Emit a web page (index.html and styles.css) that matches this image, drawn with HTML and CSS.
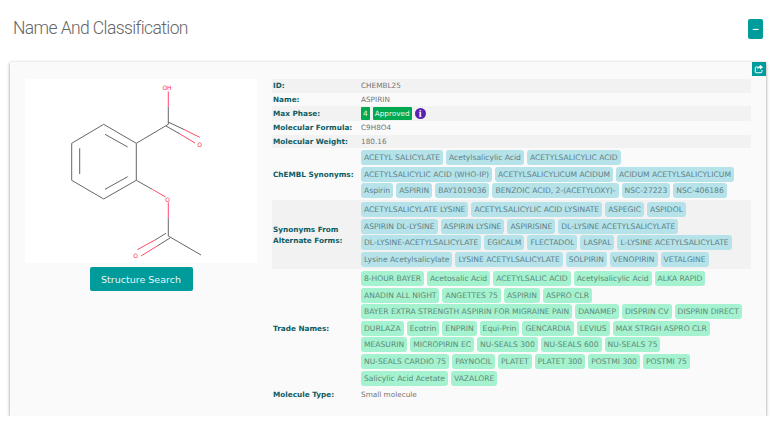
FILE: index.html
```html
<!DOCTYPE html>
<html lang="en">
<head>
    <meta charset="UTF-8">
    <title>Name And Classification</title>
    <link rel="stylesheet" href="styles.css">
</head>
<body>
    <div class="section-header">
        <h2>Name And Classification</h2>
        <button class="collapse-btn">&minus;</button>
    </div>

    <div class="card">
        <a class="share-btn">
            <svg viewBox="0 0 12 12" width="10" height="10">
                <path d="M9.5 7v2.5a1 1 0 0 1-1 1h-6a1 1 0 0 1-1-1v-5a1 1 0 0 1 1-1h2" fill="none" stroke="#fff" stroke-width="1.2"/>
                <path d="M7 1v1.6C4.8 2.8 3.6 4.2 3.6 6.8 4.4 5.4 5.4 4.9 7 4.9v1.7L11 3.8z" fill="#fff"/>
            </svg>
        </a>

        <div class="structure">
            <div class="structure-img">
                <svg viewBox="25 79 232 184" width="232" height="184">
                    <g class="bond">
                        <path d="M103.7 124.3L136.3 143.3V180.3L103.7 199L71.7 180.3V143.3Z"/>
                        <path d="M105 134.3L127.7 147M79.7 148.3V174M105 189.3L127.7 176.7"/>
                        <path d="M136.3 143.3L168.3 124.3V106.7"/>
                        <path d="M168 122L184 129.5M166 126L180 134"/>
                        <path d="M136.3 180.3L152.3 189.3"/>
                        <path d="M168.3 218.3V236L201 255"/>
                        <path d="M166 233.3L155 240M170 238L158 245.5"/>
                    </g>
                    <g class="bond-o">
                        <path d="M168.3 106.7V91.5"/>
                        <path d="M184 129.5L199.7 137.3M180 134L195 143"/>
                        <path d="M152.3 189.3L165.7 197"/>
                        <path d="M168.3 202.5V218.3"/>
                        <path d="M155 240L137.3 249.7M158 245.5L141 256"/>
                    </g>
                    <text x="167" y="90" class="atom">OH</text>
                    <text x="199.700" y="146.500" class="atom">O</text>
                    <text x="167.700" y="202" class="atom">O</text>
                    <text x="135.700" y="258" class="atom">O</text>
                </svg>
            </div>
            <button class="search-btn">Structure Search</button>
        </div>

        <table class="props">
            <tr class="alt"><th>ID:</th><td>CHEMBL25</td></tr>
            <tr><th>Name:</th><td>ASPIRIN</td></tr>
            <tr class="alt">
                <th>Max Phase:</th>
                <td>
                    <div class="phase-cell">
                        <span class="phase">4</span>
                        <span class="phase">Approved</span>
                        <span class="info">i</span>
                    </div>
                </td>
            </tr>
            <tr><th>Molecular Formula:</th><td>C9H8O4</td></tr>
            <tr class="alt"><th>Molecular Weight:</th><td>180.16</td></tr>
            <tr>
                <th>ChEMBL Synonyms:</th>
                <td>
                    <div class="chips">
                        <span>ACETYL SALICYLATE</span>
                        <span>Acetylsalicylic Acid</span>
                        <span>ACETYLSALICYLIC ACID</span>
                        <span>ACETYLSALICYLIC ACID (WHO-IP)</span>
                        <span>ACETYLSALICYLICUM ACIDUM</span>
                        <span>ACIDUM ACETYLSALICYLICUM</span>
                        <span>Aspirin</span>
                        <span>ASPIRIN</span>
                        <span>BAY1019036</span>
                        <span>BENZOIC ACID, 2-(ACETYLOXY)-</span>
                        <span>NSC-27223</span>
                        <span>NSC-406186</span>
                    </div>
                </td>
            </tr>
            <tr class="alt">
                <th>Synonyms From<br>Alternate Forms:</th>
                <td>
                    <div class="chips">
                        <span>ACETYLSALICYLATE LYSINE</span>
                        <span>ACETYLSALICYLIC ACID LYSINATE</span>
                        <span>ASPEGIC</span>
                        <span>ASPIDOL</span>
                        <span>ASPIRIN DL-LYSINE</span>
                        <span>ASPIRIN LYSINE</span>
                        <span>ASPIRISINE</span>
                        <span>DL-LYSINE ACETYLSALICYLATE</span>
                        <span>DL-LYSINE-ACETYLSALICYLATE</span>
                        <span>EGICALM</span>
                        <span>FLECTADOL</span>
                        <span>LASPAL</span>
                        <span>L-LYSINE ACETYLSALICYLATE</span>
                        <span>Lysine Acetylsalicylate</span>
                        <span>LYSINE ACETYLSALICYLATE</span>
                        <span>SOLPIRIN</span>
                        <span>VENOPIRIN</span>
                        <span>VETALGINE</span>
                    </div>
                </td>
            </tr>
            <tr>
                <th>Trade Names:</th>
                <td>
                    <div class="chips trade">
                        <span>8-HOUR BAYER</span>
                        <span>Acetosalic Acid</span>
                        <span>ACETYLSALIC ACID</span>
                        <span>Acetylsalicylic Acid</span>
                        <span>ALKA RAPID</span>
                        <span>ANADIN ALL NIGHT</span>
                        <span>ANGETTES 75</span>
                        <span>ASPIRIN</span>
                        <span>ASPRO CLR</span>
                        <span>BAYER EXTRA STRENGTH ASPIRIN FOR MIGRAINE PAIN</span>
                        <span>DANAMEP</span>
                        <span>DISPRIN CV</span>
                        <span>DISPRIN DIRECT</span>
                        <span>DURLAZA</span>
                        <span>Ecotrin</span>
                        <span>ENPRIN</span>
                        <span>Equi-Prin</span>
                        <span>GENCARDIA</span>
                        <span>LEVIUS</span>
                        <span>MAX STRGH ASPRO CLR</span>
                        <span>MEASURIN</span>
                        <span>MICROPIRIN EC</span>
                        <span>NU-SEALS 300</span>
                        <span>NU-SEALS 600</span>
                        <span>NU-SEALS 75</span>
                        <span>NU-SEALS CARDIO 75</span>
                        <span>PAYNOCIL</span>
                        <span>PLATET</span>
                        <span>PLATET 300</span>
                        <span>POSTMI 300</span>
                        <span>POSTMI 75</span>
                        <span>Salicylic Acid Acetate</span>
                        <span>VAZALORE</span>
                    </div>
                </td>
            </tr>
            <tr><th>Molecule Type:</th><td>Small molecule</td></tr>
        </table>
    </div>
</body>
</html>
```

FILE: styles.css
```css
html {
    overflow: hidden;
}

body {
    margin: 0;
    padding: 0 7px 0 10px;
    background-color: #fff;
    font-family: 'DejaVu Sans', Verdana, sans-serif;
    font-size: 7.3px;
    color: #757575;
}

.section-header {
    display: flex;
    justify-content: space-between;
    align-items: center;
    height: 62px;
    padding-left: 3px;
    padding-right: 3px;
}

h2 {
    margin: 0 0 6px;
    font-family: Roboto, 'Liberation Sans', sans-serif;
    font-size: 17.5px;
    font-weight: 300;
    letter-spacing: -0.6px;
    color: #666;
}

.collapse-btn {
    width: 15px;
    height: 20px;
    margin-bottom: 5px;
    padding: 0;
    border: none;
    border-radius: 2px;
    background-color: #009b9b;
    color: #fff;
    font-family: inherit;
    font-size: 9px;
    font-weight: bold;
}

.card {
    position: relative;
    display: flex;
    gap: 15px;
    height: 354px;
    box-sizing: border-box;
    padding: 17px 15px 0 15px;
    background-color: #fafafa;
    box-shadow: 0 1px 3px rgba(0, 0, 0, 0.45);
}

.share-btn {
    position: absolute;
    top: 0;
    right: 0;
    display: flex;
    justify-content: center;
    align-items: center;
    width: 14px;
    height: 14px;
    background-color: #009b9b;
}

.structure {
    display: flex;
    flex-direction: column;
    align-items: center;
    flex: none;
    width: 232px;
}

.structure-img {
    height: 184px;
    background-color: #fff;
}

.structure-img svg {
    display: block;
}

.bond path, .bond-o path {
    fill: none;
    stroke-width: 1;
}

.bond path {
    stroke: #666;
}

.bond-o path {
    stroke: #ff4a68;
}

.atom {
    font-size: 6px;
    fill: #ff1f4b;
    text-anchor: middle;
}

.search-btn {
    width: 103px;
    height: 24px;
    margin-top: 4px;
    padding: 0;
    border: none;
    border-radius: 2px;
    background-color: #009b9b;
    color: #e6f6f6;
    font-family: inherit;
    font-size: 9.5px;
}

.props {
    flex: 1;
    align-self: flex-start;
    border-collapse: collapse;
}

.props th {
    width: 88px;
    height: 13.5px;
    padding: 0 0 0 1px;
    color: #0d5c63;
    font-weight: bold;
    line-height: 11px;
    text-align: left;
    white-space: nowrap;
}

.props td {
    height: 13.5px;
    padding: 0;
}

.props tr.alt {
    background-color: #f2f2f2;
}

.phase-cell {
    display: flex;
    align-items: center;
    gap: 3px;
    height: 15px;
}

.phase {
    padding: 0 2px;
    line-height: 13px;
    border-radius: 1px;
    background-color: #00a94f;
    color: #eaf8ee;
}

.info {
    width: 11px;
    height: 11px;
    border-radius: 50%;
    background-color: #5a22b0;
    color: #fff;
    font-family: 'Liberation Serif', serif;
    font-size: 10px;
    font-weight: bold;
    line-height: 11px;
    text-align: center;
}

.chips {
    display: flex;
    flex-wrap: wrap;
    gap: 1.6px 3px;
    padding: 2px 0;
    font-size: 7.6px;
}

.chips span {
    padding: 0 3px;
    line-height: 15px;
    border-radius: 3px;
    background-color: #b6e3ea;
    color: #5f7f86;
}

.chips.trade span {
    background-color: #a4f2cf;
    color: #5d8a78;
}
```
